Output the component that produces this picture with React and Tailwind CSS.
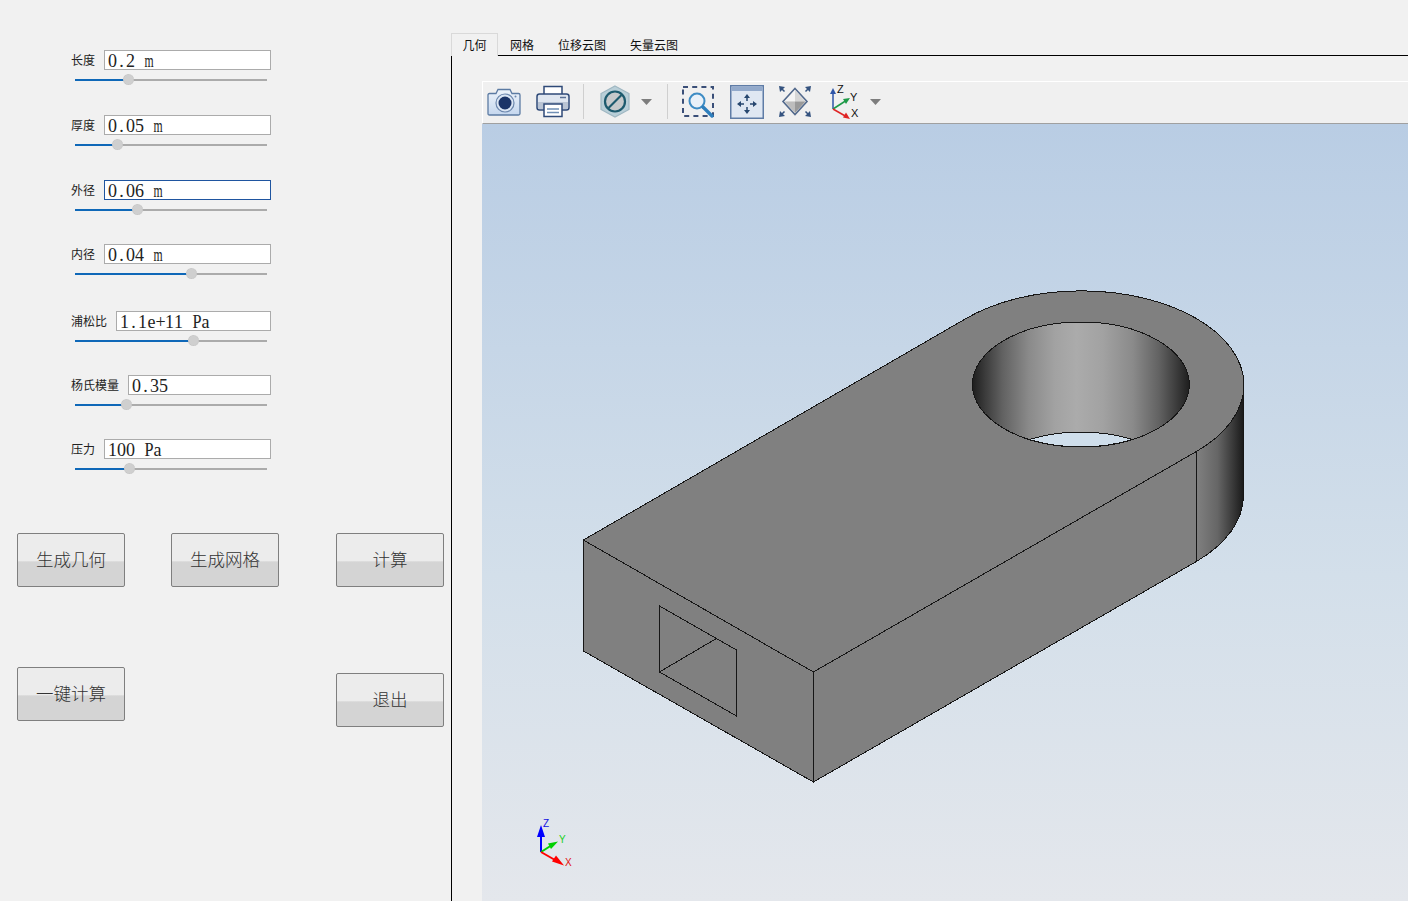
const SERIF = "font-['Liberation_Serif','Noto_Sans_CJK_SC',serif]";
const CJK = "font-['Noto_Sans_CJK_SC',sans-serif]";

const fields = [
  { label: "长度", value: "0.2 m", thumb: "left-[49px]", fill: "w-[54px]", mt: "mt-[50px]" },
  { label: "厚度", value: "0.05 m", thumb: "left-[38px]", fill: "w-[43px]", mt: "mt-[30px]" },
  { label: "外径", value: "0.06 m", thumb: "left-[58px]", fill: "w-[63px]", mt: "mt-[30px]", focus: true },
  { label: "内径", value: "0.04 m", thumb: "left-[112px]", fill: "w-[117px]", mt: "mt-[29px]" },
  { label: "浦松比", value: "1.1e+11 Pa", thumb: "left-[114px]", fill: "w-[119px]", mt: "mt-[32px]" },
  { label: "杨氏模量", value: "0.35", thumb: "left-[47px]", fill: "w-[52px]", mt: "mt-[29px]" },
  { label: "压力", value: "100 Pa", thumb: "left-[50px]", fill: "w-[55px]", mt: "mt-[29px]" },
];

function Cell({ c }) {
  const squeezed = c === "m" ? "scale-x-[0.65]" : c === "P" ? "scale-x-[0.9]" : "";
  return (
    <span className="inline-flex w-[9px] justify-center">
      <span className={"inline-block " + squeezed}>{c === " " ? "\u00a0" : c}</span>
    </span>
  );
}

function Field({ f }) {
  return (
    <div className={"ml-[71px] w-[200px] " + f.mt}>
      <div className="flex h-[20px] items-center gap-[9px]">
        <span className={"text-[12px] leading-none whitespace-nowrap text-[#222] " + CJK}>{f.label}</span>
        <div className={"flex h-[20px] flex-1 items-center overflow-hidden border bg-white pt-[1px] pl-[3px] text-[18px] leading-none text-[#222] " + SERIF + " " + (f.focus ? "border-[#1f55a0]" : "border-[#ababab]")}>
          {[...f.value].map((c, i) => <Cell key={i} c={c} />)}
        </div>
      </div>
      <div className="relative mt-[5px] ml-[4px] flex h-[10px] w-[192px] items-center">
        <div className="h-[2px] w-full bg-[#ababab]" />
        <div className={"absolute top-[4px] left-0 h-[2px] bg-[#0f68b8] " + f.fill} />
        <div className={"absolute -top-[1px] h-[11px] w-[11px] -translate-x-[1px] rounded-full border border-dotted border-[#c4c4c4] bg-[#cfcfcf] " + f.thumb} />
      </div>
    </div>
  );
}

function Btn({ children, className = "" }) {
  return (
    <button className={"flex h-[54px] w-[108px] items-center justify-center rounded-[2px] border border-[#7f7f7f] bg-[linear-gradient(#ececec_0,#ececec_52%,#e0e0e0_52%,#d4d4d4_55%,#d4d4d4_100%)] pb-[2px] text-[17.5px] leading-none font-light text-[#333] " + CJK + " " + className}>
      {children}
    </button>
  );
}

function Tab({ children, active }) {
  return (
    <div className={"relative z-10 flex h-[23px] items-center text-[12px] leading-none text-[#111] " + CJK + " " + (active ? "-mb-[1px] w-[47px] justify-center border border-b-0 border-[#d9d9d9] bg-[#f1f1f1]" : "px-[12px] pt-[3px]")}>
      {children}
    </div>
  );
}

function Caret({ className = "" }) {
  return (
    <svg width="11" height="6" viewBox="0 0 11 6" className={className}>
      <path d="M0 0H11L5.5 6Z" fill="#7d7d7d" />
    </svg>
  );
}

function Sep({ className = "" }) {
  return <div className={"h-[35px] w-[1px] bg-[#cfcfcf] " + className} />;
}

function CameraIcon() {
  return (
    <svg width="34" height="31" viewBox="0 0 34 31">
      <defs>
        <linearGradient id="cam" x1="0" y1="0" x2="0" y2="1">
          <stop offset="0" stopColor="#eef4fb" />
          <stop offset="1" stopColor="#c5d7ee" />
        </linearGradient>
      </defs>
      <path d="M2.5 7.5H9L11 3.5H23L25 7.5H31.5Q33 7.5 33 9V27.5Q33 29 31.5 29H2.5Q1 29 1 27.5V9Q1 7.5 2.5 7.5Z" fill="url(#cam)" stroke="#5c7ba3" strokeWidth="1.3" />
      <circle cx="18" cy="17" r="9" fill="#dbe6f4" stroke="#6c87ad" strokeWidth="1.2" />
      <circle cx="18" cy="17" r="6.5" fill="#1b3468" />
      <circle cx="28.5" cy="10.5" r="1" fill="#6c87ad" />
    </svg>
  );
}

function PrinterIcon() {
  return (
    <svg width="34" height="33" viewBox="0 0 34 33">
      <path d="M8 12V1.5H26V12" fill="#fff" stroke="#2f4a78" strokeWidth="1.5" />
      <rect x="1" y="9" width="32" height="16" rx="2.5" fill="#dfe6f0" stroke="#2f4a78" strokeWidth="1.5" />
      <rect x="2" y="17" width="30" height="7" fill="#b9c4d4" />
      <path d="M24 12.5H30" stroke="#5a7095" strokeWidth="1.5" />
      <path d="M8 19H26V31.5H8Z" fill="#fff" stroke="#2f4a78" strokeWidth="1.5" />
      <path d="M11 24H23M11 27.5H23" stroke="#6f8fb5" strokeWidth="1.5" />
    </svg>
  );
}

function NoIcon() {
  return (
    <svg width="30" height="33" viewBox="0 0 30 33">
      <path d="M15 1L29 8.5V24.5L15 32L1 24.5V8.5Z" fill="#b9cfd8" stroke="#9fb7c2" strokeWidth="1.2" />
      <circle cx="15" cy="16.5" r="10" fill="#c6c9cb" stroke="#1d5a6e" strokeWidth="2.2" />
      <path d="M8.5 23L21.5 10" stroke="#1d5a6e" strokeWidth="2.2" />
    </svg>
  );
}

function ZoomBoxIcon() {
  return (
    <svg width="33" height="32" viewBox="0 0 33 32">
      <rect x="1" y="1" width="30" height="29" fill="none" stroke="#3a4f78" strokeWidth="2" strokeDasharray="5 4.2" />
      <circle cx="15" cy="15" r="7.5" fill="#e9f1f9" stroke="#3e8cc4" strokeWidth="2" />
      <path d="M21 21L30 30" stroke="#2e7fbd" strokeWidth="3.4" strokeLinecap="round" />
    </svg>
  );
}

function PanIcon() {
  return (
    <svg width="34" height="34" viewBox="0 0 34 34">
      <rect x="0.75" y="0.75" width="32.5" height="32.5" fill="#dfe7f2" stroke="#5f7ca6" strokeWidth="1.5" />
      <rect x="1.5" y="1.5" width="31" height="4.5" fill="#93aacb" />
      <path d="M17 11V27M9 19H25" stroke="#27476f" strokeWidth="1.5" strokeDasharray="5 6 5" />
      <path d="M17 9L14 13H20ZM17 29L14 25H20ZM7 19L11 16V22ZM27 19L23 16V22Z" fill="#27476f" />
    </svg>
  );
}

function FitIcon() {
  return (
    <svg width="34" height="33" viewBox="0 0 34 33">
      <path d="M17 3.5L29 16.5L17 29.5L5 16.5Z" fill="#e9e9e9" stroke="#52698c" strokeWidth="1.6" />
      <path d="M17 5L6.5 16.5H17Z" fill="#f4f4f4" />
      <path d="M17 5L27.5 16.5H17Z" fill="#d6d6d6" />
      <path d="M6.5 16.5H17V28Z" fill="#bdbdbd" />
      <path d="M27.5 16.5H17V28Z" fill="#9a9a9a" />
      <path d="M1 1L7 2L2 7ZM33 1L27 2L32 7ZM1 32L7 31L2 26ZM33 32L27 31L32 26Z" fill="#35537f" />
      <path d="M3 3L6.5 6.5M31 3L27.5 6.5M3 30L6.5 26.5M31 30L27.5 26.5" stroke="#35537f" strokeWidth="1.5" />
    </svg>
  );
}

function AxesIcon() {
  return (
    <svg width="32" height="36" viewBox="0 0 32 36" className="overflow-visible">
      <path d="M3 25V7" stroke="#2f55a8" strokeWidth="1.5" />
      <path d="M3 4L0 10H6Z" fill="#2f55a8" />
      <path d="M3 25L17 16" stroke="#1e9a48" strokeWidth="1.5" />
      <path d="M20 14L13 15L16 20Z" fill="#1e9a48" />
      <path d="M3 25L17 33" stroke="#e02525" strokeWidth="1.5" />
      <path d="M20 35L13 33.5L16 28.5Z" fill="#e02525" />
      <text x="7" y="9" fontSize="11" fill="#111" fontFamily="Liberation Sans, sans-serif">Z</text>
      <text x="20" y="17" fontSize="11" fill="#111" fontFamily="Liberation Sans, sans-serif">Y</text>
      <text x="21" y="33" fontSize="11" fill="#111" fontFamily="Liberation Sans, sans-serif">X</text>
    </svg>
  );
}

function Model() {
  const stops = [
    [0, "#1e1e1e"], [0.06, "#3c3c3c"], [0.14, "#626262"], [0.26, "#8a8a8a"], [0.38, "#a2a2a2"],
    [0.48, "#ababab"], [0.6, "#a2a2a2"], [0.74, "#8a8a8a"], [0.86, "#626262"], [0.94, "#3c3c3c"], [1, "#1e1e1e"],
  ];
  return (
    <svg viewBox="482 124 926 777" width="926" height="777" className="block">
      <defs>
        <linearGradient id="bore" gradientUnits="userSpaceOnUse" x1="973" y1="0" x2="1190" y2="0">
          {stops.map(([o, c]) => <stop key={o} offset={o} stopColor={c} />)}
        </linearGradient>
        <linearGradient id="side" gradientUnits="userSpaceOnUse" x1="1197" y1="0" x2="1244" y2="0">
          <stop offset="0" stopColor="#808080" />
          <stop offset="0.45" stopColor="#666" />
          <stop offset="0.8" stopColor="#363636" />
          <stop offset="1" stopColor="#1a1a1a" />
        </linearGradient>
      </defs>
      <g shapeRendering="crispEdges" stroke="#161616" strokeWidth="1" transform="translate(-0.6 0)">
        <path d="M1197 451.5A162.5 94 0 0 0 1244 385V495A162.5 94 0 0 1 1197 561.5Z" fill="url(#side)" />
        <path d="M814 672L1197 451.5V561.5L814 782Z" fill="#808080" />
        <path d="M584 540L814 672V782L584 651Z" fill="#808080" />
        <path d="M584 540L814 672L1197 451.5A162.5 94 0 1 0 966.6 318.5Z" fill="#808080" />
        <ellipse cx="1081.5" cy="384.5" rx="108.5" ry="62.5" fill="url(#bore)" />
        <path d="M1030 439.5A108.5 62.5 0 0 0 1133 439.5A108.5 62.5 0 0 0 1030 439.5Z" fill="#cfdeeb" />
        <path d="M660 606L737 650V716L660 672ZM660 672L717 638.5" fill="none" />
      </g>
      <path d="M541 852V832" stroke="#0000ff" strokeWidth="2" />
      <path d="M541 825L537 837H545Z" fill="#0000ff" />
      <path d="M541 852L552 845" stroke="#00d000" strokeWidth="2" />
      <path d="M558 841.5L548 843.5L551 849Z" fill="#00d000" />
      <path d="M541 852L555 860" stroke="#ff0000" strokeWidth="2" />
      <path d="M564 865.5L552 861.5L556 855.5Z" fill="#ff0000" />
      <text x="543" y="827" fontSize="10" fill="#1010e0" fontFamily="Liberation Sans, sans-serif">Z</text>
      <text x="559" y="843" fontSize="10" fill="#20d020" fontFamily="Liberation Sans, sans-serif">Y</text>
      <text x="565" y="866" fontSize="10" fill="#e01010" fontFamily="Liberation Sans, sans-serif">X</text>
    </svg>
  );
}

export default function App() {
  return (
    <div className="flex h-[901px] w-[1408px] overflow-hidden bg-[#f1f1f1]">
      <div className="w-[451px] shrink-0">
        {fields.map((f) => <Field key={f.label} f={f} />)}
        <div className="mt-[59px] ml-[17px] flex">
          <Btn>生成几何</Btn>
          <Btn className="ml-[46px]">生成网格</Btn>
          <Btn className="ml-[57px]">计算</Btn>
        </div>
        <div className="mt-[80px] ml-[17px] flex items-start">
          <Btn>一键计算</Btn>
          <Btn className="mt-[6px] ml-[211px]">退出</Btn>
        </div>
      </div>
      <div className="flex min-w-0 flex-1 flex-col">
        <div className="flex h-[55px] items-end pt-[32px]">
          <Tab active>几何</Tab>
          <Tab>网格</Tab>
          <Tab>位移云图</Tab>
          <Tab>矢量云图</Tab>
        </div>
        <div className="flex min-h-0 flex-1 flex-col border-t border-l border-black pt-[25px] pl-[30px]">
          <div className="flex h-[43px] shrink-0 items-center border-t border-b border-l border-t-white border-b-[#a0a0a0] border-l-white bg-[#f0f0f0] pb-[2px] pl-[4px]">
            <CameraIcon />
            <div className="ml-[15px]"><PrinterIcon /></div>
            <Sep className="ml-[13px]" />
            <div className="ml-[16px]"><NoIcon /></div>
            <Caret className="ml-[11px]" />
            <Sep className="ml-[15px]" />
            <div className="ml-[14px]"><ZoomBoxIcon /></div>
            <div className="ml-[15px]"><PanIcon /></div>
            <div className="ml-[14px]"><FitIcon /></div>
            <div className="ml-[18px]"><AxesIcon /></div>
            <Caret className="ml-[8px]" />
          </div>
          <div className="min-h-0 flex-1 bg-[linear-gradient(180deg,#b9cde4_0%,#d3dfea_58%,#e4e7ec_100%)]">
            <Model />
          </div>
        </div>
      </div>
    </div>
  );
}
